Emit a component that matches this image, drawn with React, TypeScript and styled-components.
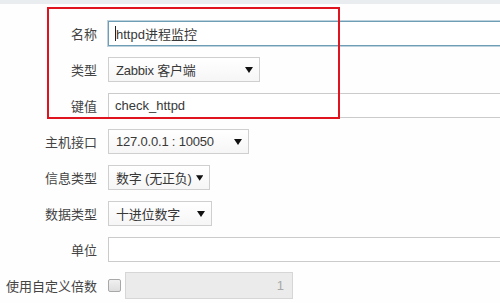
import React from "react";
import styled, { createGlobalStyle } from "styled-components";

const Global = createGlobalStyle`
  html, body { margin: 0; padding: 0; background: #ffffff; overflow: hidden; }
  body { font-family: "Liberation Sans", "Noto Sans CJK SC", sans-serif; }
`;

const Page = styled.div`
  position: relative;
  width: 500px;
  height: 303px;
  overflow: hidden;
  background: #fefefe;
`;

const TopStrip = styled.div`
  height: 4px;
  background: #e9edf0;
`;

const Form = styled.div`
  display: grid;
  grid-template-columns: 97px 1fr;
  grid-auto-rows: 25px;
  column-gap: 11px;
  row-gap: 11px;
  padding-top: 17px;
  font-size: 13px;
  color: #333;
`;

const Label = styled.div`
  display: flex;
  align-items: center;
  justify-content: flex-end;
  color: #444;
  white-space: nowrap;
`;

const Field = styled.div<{ $w?: number; $focus?: boolean }>`
  box-sizing: border-box;
  height: 25px;
  width: ${(p) => (p.$w ? `${p.$w}px` : "420px")};
  display: flex;
  align-items: center;
  padding: 0 6px;
  background: #fff;
  border: 1px solid ${(p) => (p.$focus ? "#6e9db6" : "#cbcbcb")};
  box-shadow: ${(p) => (p.$focus ? "0 0 0 1px rgba(110,157,182,0.45)" : "none")};
  color: #383838;
  white-space: nowrap;
`;

const Caret = styled.span`
  display: inline-block;
  width: 1px;
  height: 15px;
  background: #222;
`;

const Select = styled.div<{ $w: number }>`
  box-sizing: border-box;
  height: 25px;
  width: ${(p) => p.$w}px;
  display: flex;
  align-items: center;
  justify-content: space-between;
  gap: 4px;
  padding: 0 6px 0 7px;
  background: linear-gradient(#ffffff, #f6f6f6);
  border: 1px solid #cfcfcf;
  color: #383838;
  white-space: nowrap;
`;

const SelectText = styled.span`
  letter-spacing: -0.2px;
`;

const Arrow = () => (
  <svg width="8" height="6" viewBox="0 0 8 6">
    <path d="M0 0 L8 0 L4 6 Z" fill="#111" />
  </svg>
);

const Inline = styled.div`
  display: flex;
  align-items: center;
  gap: 4px;
`;

const Check = styled.div`
  box-sizing: border-box;
  width: 13px;
  height: 13px;
  border: 1px solid #a8a8a8;
  border-radius: 2px;
  background: linear-gradient(#f0f0f0, #dedede);
`;

const Disabled = styled.div`
  box-sizing: border-box;
  width: 168px;
  height: 27px;
  display: flex;
  align-items: center;
  justify-content: flex-end;
  padding-right: 8px;
  background: #ebebeb;
  border: 1px solid #d6d6d6;
  color: #a8a8a8;
`;

const Highlight = styled.div`
  position: absolute;
  left: 47px;
  top: 7px;
  width: 293px;
  height: 112px;
  box-sizing: border-box;
  border: 2px solid #e0141e;
  pointer-events: none;
`;

export default function App() {
  return (
    <>
      <Global />
      <Page>
        <TopStrip />
        <Form>
          <Label>名称</Label>
          <Field $focus>
            <Caret />
            httpd进程监控
          </Field>

          <Label>类型</Label>
          <Select $w={152}>
            <SelectText>Zabbix 客户端</SelectText>
            <Arrow />
          </Select>

          <Label>键值</Label>
          <Field>check_httpd</Field>

          <Label>主机接口</Label>
          <Select $w={141}>
            <SelectText>127.0.0.1 : 10050</SelectText>
            <Arrow />
          </Select>

          <Label>信息类型</Label>
          <Select $w={102}>
            <SelectText>数字 (无正负)</SelectText>
            <Arrow />
          </Select>

          <Label>数据类型</Label>
          <Select $w={104}>
            <SelectText>十进位数字</SelectText>
            <Arrow />
          </Select>

          <Label>单位</Label>
          <Field />

          <Label>使用自定义倍数</Label>
          <Inline>
            <Check />
            <Disabled>1</Disabled>
          </Inline>
        </Form>
        <Highlight />
      </Page>
    </>
  );
}
